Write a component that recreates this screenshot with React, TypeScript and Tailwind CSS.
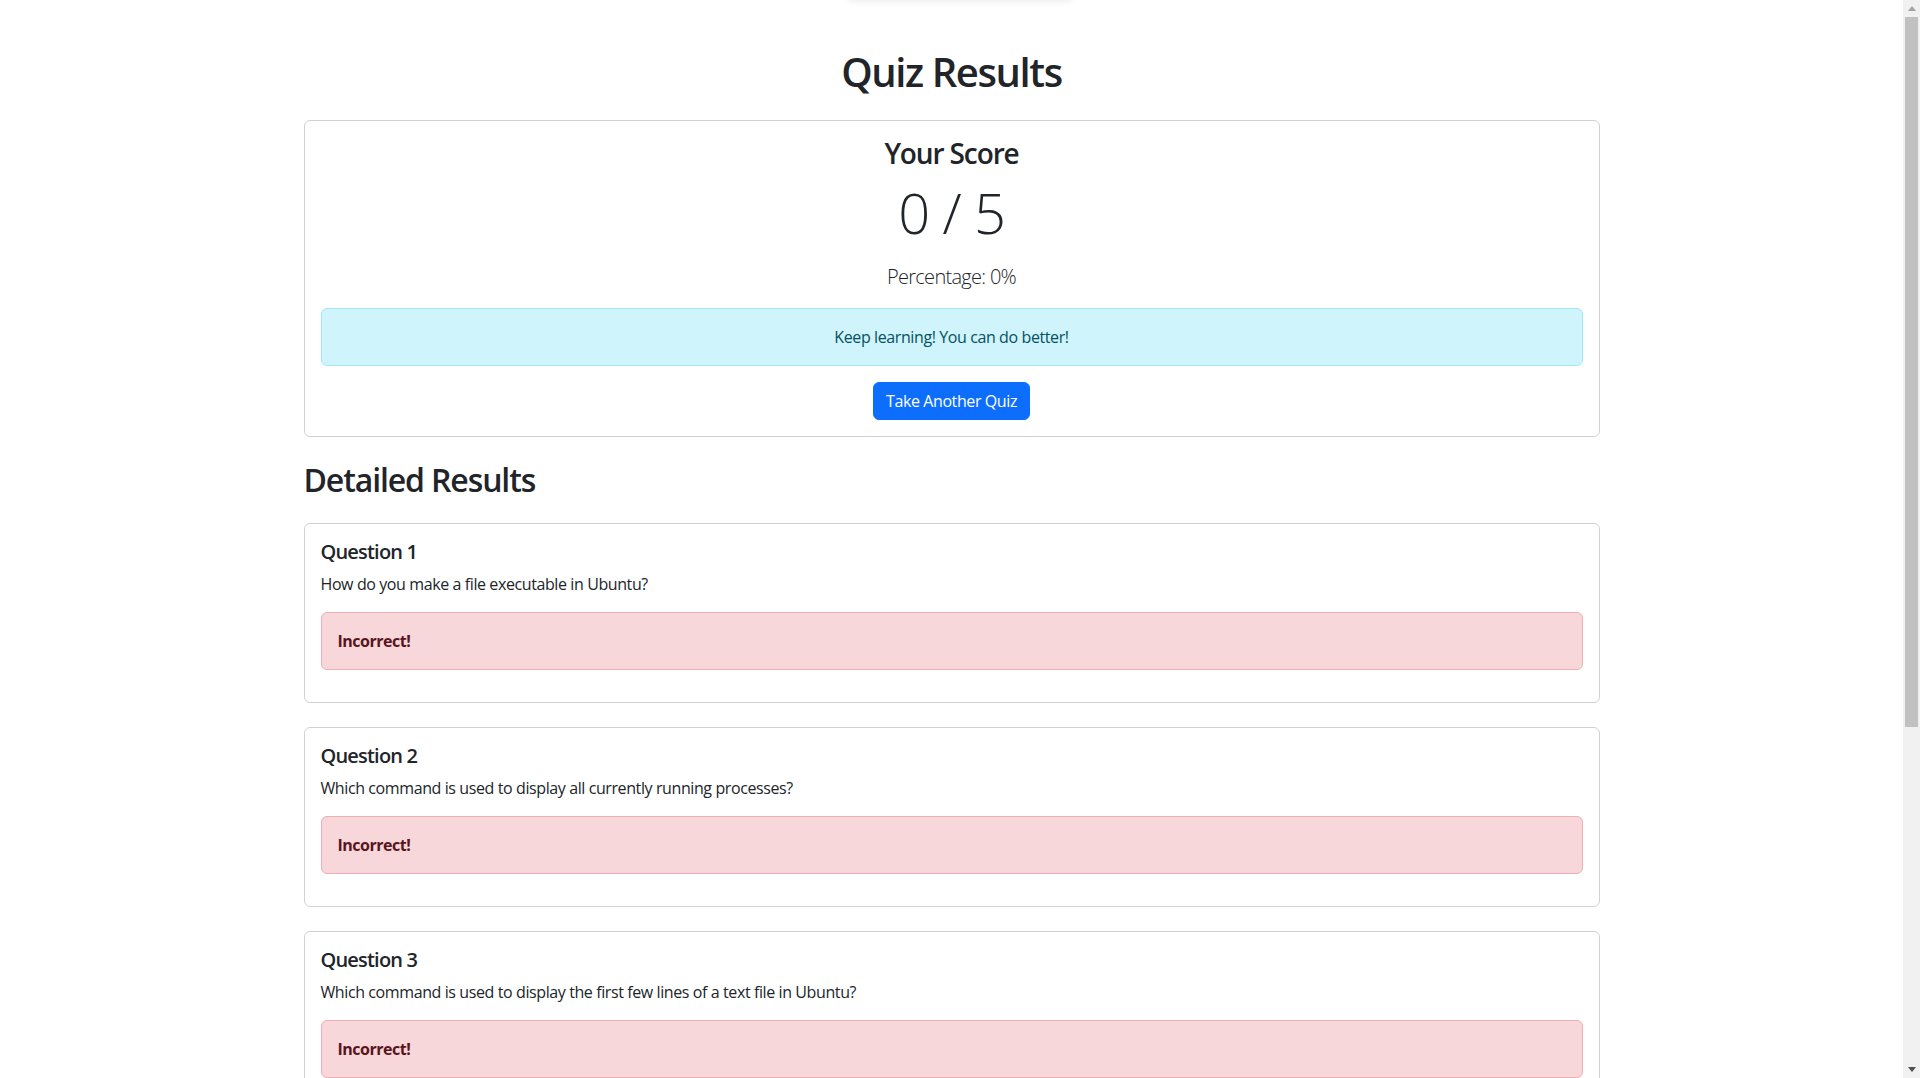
const questions = [
  { id: 1, text: "How do you make a file executable in Ubuntu?" },
  { id: 2, text: "Which command is used to display all currently running processes?" },
  { id: 3, text: "Which command is used to display the first few lines of a text file in Ubuntu?" },
  { id: 4, text: "Which command is used to change the current directory in Ubuntu?" },
  { id: 5, text: "How do you list all files, including hidden ones, in a directory?" },
]

function Scrollbar() {
  return (
    <div className="w-[17px] h-full bg-[#f1f1f1] flex flex-col shrink-0">
      <div className="h-[17px] flex items-center justify-center">
        <svg width="8" height="5" viewBox="0 0 8 5">
          <path d="M0 5 L4 0 L8 5 Z" fill="#a3a3a3" />
        </svg>
      </div>
      <div className="flex-1 px-[2px]">
        <div className="h-[710px] bg-[#c1c1c1]" />
      </div>
      <div className="h-[17px] flex items-center justify-center">
        <svg width="8" height="5" viewBox="0 0 8 5">
          <path d="M0 0 L8 0 L4 5 Z" fill="#505050" />
        </svg>
      </div>
    </div>
  )
}

function QuestionCard({ id, text }: { id: number; text: string }) {
  return (
    <div className="border border-[#d2d2d2] rounded-md p-4 mb-6">
      <h5 className="text-[20px] leading-[24px] font-semibold tracking-[-0.04em] mb-2">Question {id}</h5>
      <p className="leading-6 mb-4">{text}</p>
      <div className="bg-[#f8d7da] border border-[#f1aeb5] text-[#58151c] rounded-md p-4 mb-4 leading-6">
        <strong className="font-bold tracking-[-0.03em]">Incorrect!</strong>
      </div>
    </div>
  )
}

export default function App() {
  return (
    <div
      className="relative h-screen flex overflow-hidden bg-white text-[#212529] text-base tracking-[-0.025em]"
      style={{ fontFamily: '"Open Sans", "Noto Sans", sans-serif' }}
    >
      {/* edge of a fixed element sitting just above the viewport */}
      <div className="absolute left-1/2 -translate-x-1/2 -top-[12px] w-[226px] h-[12px] rounded-md bg-white shadow-[0_2px_6px_rgba(0,0,0,0.07)]" />

      <main className="flex-1 min-w-0 overflow-hidden">
        <div className="mx-auto w-[1296px] pt-12">
          <h1 className="text-center text-[40px] leading-[48px] font-semibold tracking-[-0.035em] mb-6">
            Quiz Results
          </h1>

          <section className="border border-[#d2d2d2] rounded-md p-4 text-center mb-6">
            <h3 className="text-[28px] leading-[33.6px] font-semibold tracking-[-0.04em] mb-2">Your Score</h3>
            <p className="text-[56px] leading-[67.2px] font-light tracking-[-0.02em] mb-4">0 / 5</p>
            <p className="text-[20px] leading-[30px] font-light tracking-[-0.035em] mb-4">Percentage: 0%</p>
            <div className="bg-[#cff4fc] border border-[#9eeaf9] text-[#055160] rounded-md p-4 mb-4 leading-6">
              Keep learning! You can do better!
            </div>
            <button className="bg-[#0d6efd] border border-[#0d6efd] text-white rounded-md px-3 py-1.5 leading-6">
              Take Another Quiz
            </button>
          </section>

          <h2 className="text-[32px] leading-[38.4px] font-semibold tracking-[-0.035em] mb-6">Detailed Results</h2>

          {questions.map((q) => (
            <QuestionCard key={q.id} id={q.id} text={q.text} />
          ))}
        </div>
      </main>

      <Scrollbar />
    </div>
  )
}
